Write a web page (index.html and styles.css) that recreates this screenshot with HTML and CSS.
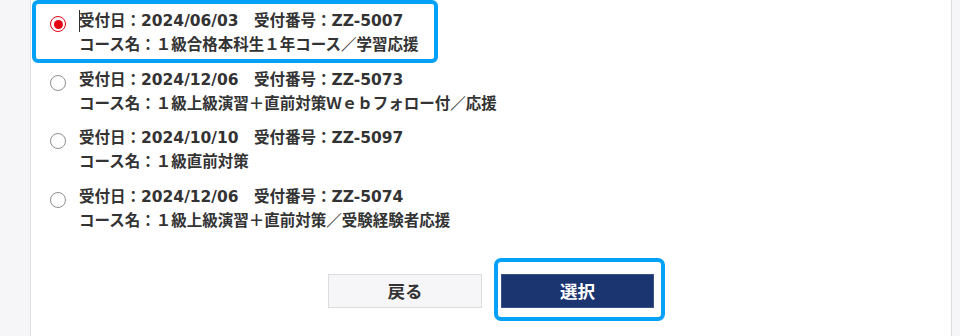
FILE: index.html
```html
<!DOCTYPE html>
<html lang="ja">
<head>
	<meta charset="UTF-8">
	<meta name="viewport" content="width=device-width, initial-scale=1.0">
	<title>受付選択</title>

	<link rel="stylesheet" href="styles.css">
</head>
<body>
	<div class="panel">
		<ul class="entries">
			<li>
				<label class="entry entry--focus">
					<span class="entry__radio entry__radio--on"></span>
					<span class="entry__text">
						<span class="entry__line"><span class="caret"></span>受付日：2024/06/03　受付番号：ZZ-5007</span>
						<span class="entry__line">コース名：１級合格本科生１年コース／学習応援</span>
					</span>
				</label>
			</li>
			<li>
				<label class="entry">
					<span class="entry__radio"></span>
					<span class="entry__text">
						<span class="entry__line">受付日：2024/12/06　受付番号：ZZ-5073</span>
						<span class="entry__line">コース名：１級上級演習＋直前対策Ｗｅｂフォロー付／応援</span>
					</span>
				</label>
			</li>
			<li>
				<label class="entry">
					<span class="entry__radio"></span>
					<span class="entry__text">
						<span class="entry__line">受付日：2024/10/10　受付番号：ZZ-5097</span>
						<span class="entry__line">コース名：１級直前対策</span>
					</span>
				</label>
			</li>
			<li>
				<label class="entry">
					<span class="entry__radio"></span>
					<span class="entry__text">
						<span class="entry__line">受付日：2024/12/06　受付番号：ZZ-5074</span>
						<span class="entry__line">コース名：１級上級演習＋直前対策／受験経験者応援</span>
					</span>
				</label>
			</li>
		</ul>

		<div class="actions">
			<button class="btn btn--back">戻る</button>
			<span class="btn-focus">
				<button class="btn btn--select">選択</button>
			</span>
		</div>
	</div>
</body>
</html>
```

FILE: styles.css
```css
* { box-sizing: border-box }
body {
	margin: 0;
	height: 336px;
	overflow: hidden;
	background: #f6f6f8;
	color: #333;
	font-family: 'DejaVu Sans', 'Noto Sans CJK JP', sans-serif;
	font-weight: bold;
}
.panel {
	margin-left: 30px;
	width: 922px;
	height: 100%;
	padding: 4px 0 0 5px;
	background: #fff;
	border-left: 1px solid #dedede;
	border-right: 1px solid #dedede;
}
.entries {
	list-style: none;
	margin: 0;
	padding: 0;
}
.entries li {
	margin-bottom: 3.5px;
}
.entry {
	display: inline-flex;
	align-items: flex-start;
	height: 55px;
	padding: 5px 16px 0 14px;
	border-radius: 2px;
	cursor: pointer;
}
.entry--focus {
	outline: 4px solid #03a2f8;
}
.entry__radio {
	position: relative;
	flex: none;
	width: 16px;
	height: 16px;
	margin-top: 7px;
	margin-right: 13px;
	border: 1px solid #8f8f8f;
	border-radius: 50%;
	background: #fff;
}
.entry__radio--on {
	border: 1.5px solid #e60012;
}
.entry__radio--on::after {
	content: '';
	position: absolute;
	top: 0;
	left: 0;
	right: 0;
	bottom: 0;
	width: 9px;
	height: 9px;
	margin: auto;
	border-radius: 50%;
	background: #e60012;
}
.entry__text {
	display: flex;
	flex-direction: column;
	font-size: 15.5px;
}
.entry__line {
	line-height: 24px;
	white-space: nowrap;
}
.caret {
	display: inline-block;
	width: 0;
	height: 22px;
	margin-right: -1px;
	vertical-align: -6px;
	border-left: 1px solid #333;
}
.actions {
	display: flex;
	justify-content: center;
	gap: 19px;
	margin-top: 39px;
	padding-right: 5px;
}
.btn {
	-webkit-appearance: none;
	width: 154px;
	height: 34px;
	padding: 0;
	font-family: inherit;
	font-size: 17.5px;
	font-weight: bold;
	cursor: pointer;
}
.btn--back {
	color: #333;
	background: #f6f6f8;
	border: 1px solid #dcdcdc;
}
.btn--select {
	display: block;
	width: 153px;
	color: #fff;
	background: #1a3570;
	border: 1px solid #3a5288;
}
.btn-focus {
	display: block;
	margin: -12px -7px -9px -3px;
	padding: 12px 7px 9px 3px;
	border-radius: 3px;
	outline: 4px solid #03a2f8;
}
```
